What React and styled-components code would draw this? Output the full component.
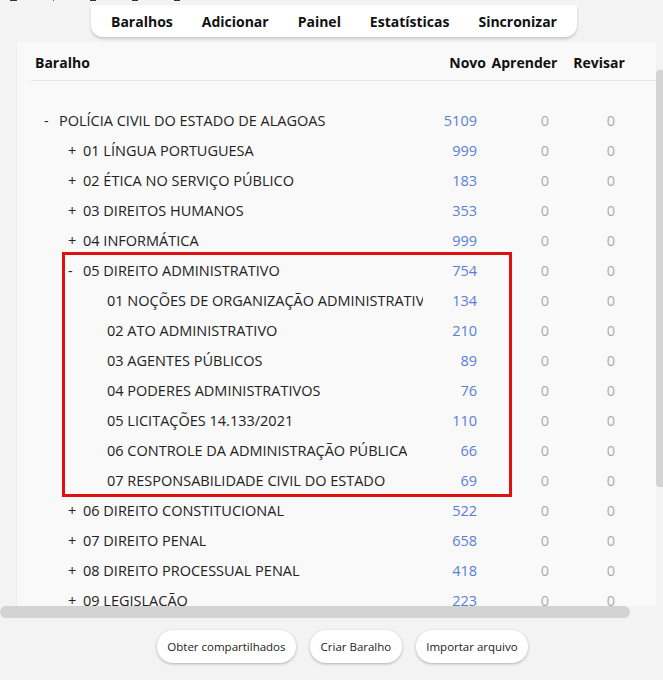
import React from "react";
import styled, { createGlobalStyle } from "styled-components";

const GlobalStyle = createGlobalStyle`
  html, body {
    margin: 0;
    padding: 0;
    background: #f3f3f3;
    font-family: "Open Sans", "Noto Sans", "Liberation Sans", sans-serif;
    color: #222;
  }
`;

const Page = styled.div`
  width: 663px;
  height: 680px;
  overflow: hidden;
  display: flex;
  flex-direction: column;
`;

const TopStrip = styled.div`
  height: 5px;
  display: flex;
  align-items: flex-start;
  gap: 36px;
  padding-left: 10px;
`;

const Mark = styled.span`
  display: block;
  width: ${p => p.w || 7}px;
  height: 1px;
  background: ${p => p.c || "#333"};
`;

const Toolbar = styled.nav`
  align-self: flex-start;
  margin-left: 91px;
  width: 486px;
  height: 32px;
  box-sizing: border-box;
  background: #fff;
  border-radius: 0 0 12px 12px;
  box-shadow: 0 2px 3px rgba(0, 0, 0, 0.18);
  display: flex;
  align-items: center;
  justify-content: space-between;
  padding: 0 20px;
`;

const NavItem = styled.a`
  font-size: 14px;
  font-weight: 700;
  color: #111;
  cursor: pointer;
`;

const ScrollArea = styled.div`
  margin-top: 5px;
  display: flex;
  height: 564px;
`;

const Panel = styled.div`
  margin-left: 16px;
  width: 640px;
  height: 564px;
  overflow: hidden;
  background: #f9f9f9;
  border-left: 1px solid #ececec;
  box-sizing: border-box;
  padding-left: 14px;
`;

const VTrack = styled.div`
  width: 7px;
  padding-top: 28px;
`;

const VThumb = styled.div`
  height: 417px;
  background: #d4d4d4;
  border-radius: 4px 0 0 4px;
`;

const HScroll = styled.div`
  width: 630px;
  height: 12px;
  background: #d3d3d3;
  border-radius: 6px;
`;

const Grid = styled.div`
  display: grid;
  grid-template-columns: 392px 64px 79px 66px;
  align-items: center;
`;

const HeaderRow = styled(Grid)`
  height: 36px;
  padding-top: 2px;
  border-bottom: 1px solid #e4e4e4;
  margin-bottom: 24px;
`;

const HeadCell = styled.div`
  font-size: 14px;
  font-weight: 700;
  color: #111;
  text-align: ${p => p.align || "left"};
  padding-left: ${p => p.pl || 0}px;
  padding-right: ${p => p.pr || 0}px;
`;

const Row = styled(Grid)`
  height: 30px;
  font-size: 14.5px;
`;

const NameCell = styled.div`
  padding-left: ${p => 13 + p.depth * 24}px;
  display: flex;
  white-space: nowrap;
  overflow: hidden;
`;

const Toggle = styled.span`
  flex: 0 0 15px;
  color: #222;
`;

const DeckName = styled.span`
  color: #222;
  overflow: hidden;
`;

const Count = styled.div`
  text-align: right;
  padding-right: ${p => p.pr}px;
  color: ${p => (p.blue ? "#5a7fd6" : "#ababab")};
`;

const Highlight = styled.div`
  position: relative;
  &::after {
    content: "";
    position: absolute;
    left: 31px;
    top: -3px;
    width: 450px;
    height: 245px;
    box-sizing: border-box;
    border: 3px solid #e01010;
    pointer-events: none;
  }
`;

const ButtonRow = styled.div`
  margin-top: 12px;
  display: flex;
  justify-content: center;
  gap: 14px;
  padding-left: 22px;
`;

const Button = styled.button`
  height: 33px;
  padding: 0 10.5px;
  border: none;
  border-radius: 16px;
  background: #fff;
  box-shadow: 0 1px 3px rgba(0, 0, 0, 0.28);
  font-family: "Open Sans", "Noto Sans", sans-serif;
  font-size: 11.5px;
  color: #222;
  cursor: pointer;
`;

const top = { name: "POLÍCIA CIVIL DO ESTADO DE ALAGOAS", novo: 5109 };

const before = [
  { name: "01 LÍNGUA PORTUGUESA", novo: 999 },
  { name: "02 ÉTICA NO SERVIÇO PÚBLICO", novo: 183 },
  { name: "03 DIREITOS HUMANOS", novo: 353 },
  { name: "04 INFORMÁTICA", novo: 999 },
];

const admin = { name: "05 DIREITO ADMINISTRATIVO", novo: 754 };

const adminChildren = [
  { name: "01 NOÇÕES DE ORGANIZAÇÃO ADMINISTRATIVA", novo: 134 },
  { name: "02 ATO ADMINISTRATIVO", novo: 210 },
  { name: "03 AGENTES PÚBLICOS", novo: 89 },
  { name: "04 PODERES ADMINISTRATIVOS", novo: 76 },
  { name: "05 LICITAÇÕES 14.133/2021", novo: 110 },
  { name: "06 CONTROLE DA ADMINISTRAÇÃO PÚBLICA", novo: 66 },
  { name: "07 RESPONSABILIDADE CIVIL DO ESTADO", novo: 69 },
];

const after = [
  { name: "06 DIREITO CONSTITUCIONAL", novo: 522 },
  { name: "07 DIREITO PENAL", novo: 658 },
  { name: "08 DIREITO PROCESSUAL PENAL", novo: 418 },
  { name: "09 LEGISLAÇÃO", novo: 223 },
];

function DeckRow({ deck, depth, toggle }) {
  return (
    <Row>
      <NameCell depth={depth}>
        <Toggle>{toggle}</Toggle>
        <DeckName>{deck.name}</DeckName>
      </NameCell>
      <Count blue pr={10}>{deck.novo}</Count>
      <Count pr={17}>0</Count>
      <Count pr={17}>0</Count>
    </Row>
  );
}

export default function App() {
  return (
    <Page>
      <GlobalStyle />
      <TopStrip>
        <Mark w={7} />
        <Mark w={1} c="#a33" />
        <Mark w={6} />
        <Mark w={6} />
        <Mark w={6} />
      </TopStrip>
      <Toolbar>
        <NavItem>Baralhos</NavItem>
        <NavItem>Adicionar</NavItem>
        <NavItem>Painel</NavItem>
        <NavItem>Estatísticas</NavItem>
        <NavItem>Sincronizar</NavItem>
      </Toolbar>
      <ScrollArea>
        <Panel>
          <HeaderRow>
            <HeadCell pl={4}>Baralho</HeadCell>
            <HeadCell align="right" pr={1}>Novo</HeadCell>
            <HeadCell align="center" pr={4}>Aprender</HeadCell>
            <HeadCell align="center">Revisar</HeadCell>
          </HeaderRow>
          <DeckRow deck={top} depth={0} toggle="-" />
          {before.map(d => (
            <DeckRow key={d.name} deck={d} depth={1} toggle="+" />
          ))}
          <Highlight>
            <DeckRow deck={admin} depth={1} toggle="-" />
            {adminChildren.map(d => (
              <DeckRow key={d.name} deck={d} depth={2} toggle="" />
            ))}
          </Highlight>
          {after.map(d => (
            <DeckRow key={d.name} deck={d} depth={1} toggle="+" />
          ))}
        </Panel>
        <VTrack>
          <VThumb />
        </VTrack>
      </ScrollArea>
      <HScroll />
      <ButtonRow>
        <Button>Obter compartilhados</Button>
        <Button>Criar Baralho</Button>
        <Button>Importar arquivo</Button>
      </ButtonRow>
    </Page>
  );
}
